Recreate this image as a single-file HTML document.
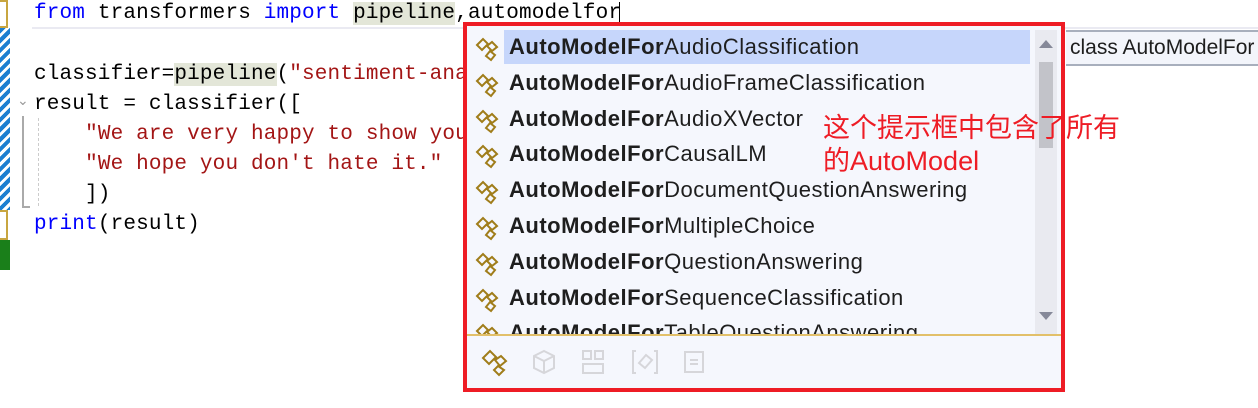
<!DOCTYPE html>
<html><head><meta charset="utf-8"><style>
body{margin:0;width:1258px;height:408px;background:#fff;position:relative;overflow:hidden;font-family:"Liberation Sans","Noto Sans CJK SC",sans-serif}
.code{position:absolute;left:34px;font-family:"Liberation Mono",monospace;font-size:21px;letter-spacing:0.16px;white-space:pre;color:#000;line-height:30px}
.k{color:#0000ff}.s{color:#a31515}.h{background:#e3e6d8}
.pop{position:absolute;left:463px;top:22px;width:594px;height:362px;border:4px solid #ee1c25;background:#f5f7fd}
.item{position:absolute;left:4px;height:34px;line-height:34px;font-size:22px;letter-spacing:0.5px;color:#1e1e1e;white-space:nowrap}
.item b{font-weight:bold}
.item svg{position:absolute;left:4px;top:6px}
.item span{position:absolute;left:38px}
</style></head><body>
<div style="position:absolute;left:0;top:0;width:6px;height:24px;border:2px solid #c8a640;border-left:none;background:#fff"></div>
<div style="position:absolute;left:0;top:28px;width:10px;height:182px;background:repeating-linear-gradient(135deg,#1c7fd1 0 4px,#fff 4px 7px)"></div>
<div style="position:absolute;left:0;top:210px;width:6px;height:26px;border:2px solid #c8a640;border-left:none"></div>
<div style="position:absolute;left:0;top:240px;width:10px;height:30px;background:#1a7f1a"></div>
<div style="position:absolute;left:32px;top:0;width:1226px;height:27px;border-bottom:2px solid #eaeaf2"></div>
<div style="position:absolute;left:22px;top:116px;width:2px;height:92px;background:#aaa"></div>
<div style="position:absolute;left:22px;top:206px;width:8px;height:2px;background:#aaa"></div>
<div style="position:absolute;left:38px;top:118px;width:0;height:88px;border-left:1px dashed #ccc"></div>
<div style="position:absolute;left:17px;top:92px;color:#999;font-size:14px">&#8964;</div>
<div class="code" style="top:-1px"><span class="k">from</span> transformers <span class="k">import</span> <span class="h">pipeline</span>,automodelfor</div>
<div style="position:absolute;left:619px;top:2px;width:1px;height:20px;background:#000"></div>
<div class="code" style="top:60px">classifier=<span class="h">pipeline</span>(<span class="s">"sentiment-ana</span></div>
<div class="code" style="top:90px">result = classifier([</div>
<div class="code" style="top:120px">    <span class="s">"We are very happy to show you</span></div>
<div class="code" style="top:150px">    <span class="s">"We hope you don't hate it."</span></div>
<div class="code" style="top:180px">    ])</div>
<div class="code" style="top:210px"><span class="k">print</span>(result)</div>
<div style="position:absolute;left:1066px;top:30px;width:200px;height:32px;background:#f3f5fb;border-top:2px solid #a8afbd;border-bottom:2px solid #a8afbd;font-size:21px;line-height:32px;padding-left:4px;color:#1e1e1e;white-space:nowrap">class AutoModelFor</div>
<div class="pop">
<div style="position:absolute;left:37px;top:4px;width:526px;height:34px;background:#c6d6fb"></div>
<div style="position:absolute;left:568px;top:4px;width:22px;height:306px;background:#e9eaf0"></div>
<div style="position:absolute;left:572px;top:36px;width:14px;height:86px;background:#c2c3c9"></div>
<div style="position:absolute;left:572px;top:14px;width:0;height:0;border-left:7px solid transparent;border-right:7px solid transparent;border-bottom:8px solid #868999"></div>
<div style="position:absolute;left:572px;top:286px;width:0;height:0;border-left:7px solid transparent;border-right:7px solid transparent;border-top:8px solid #868999"></div>
<div style="position:absolute;left:0;top:4px;width:566px;height:306px;overflow:hidden">
<div id="list"></div>
</div>
<div style="position:absolute;left:0;top:308px;width:594px;height:2px;background:#e2c06a"></div>
<svg style="position:absolute;left:14px;top:322px" width="34" height="30" viewBox="0 0 34 30" fill="none" stroke="#a07d1a" stroke-width="2"><path d="M2 10 L9 3 L15 9 L8 16Z M14 12 L20 8 L25 13 L19 18Z M17 18 L23 22 L18 27 L13 22Z"/></svg>
<svg style="position:absolute;left:64px;top:322px" width="26" height="28" viewBox="0 0 26 28" fill="none" stroke="#d6d6da" stroke-width="2"><path d="M13 3 L23 8 L23 20 L13 25 L3 20 L3 8Z M3 8 L13 13 L23 8 M13 13 L13 25"/></svg>
<svg style="position:absolute;left:114px;top:323px" width="24" height="26" viewBox="0 0 24 26" fill="none" stroke="#d6d6da" stroke-width="2"><rect x="2" y="2" width="8" height="8"/><rect x="14" y="2" width="8" height="8"/><rect x="2" y="15" width="20" height="9"/></svg>
<svg style="position:absolute;left:164px;top:323px" width="28" height="26" viewBox="0 0 28 26" fill="none" stroke="#d6d6da" stroke-width="2"><path d="M5 2 L2 2 L2 24 L5 24 M23 2 L26 2 L26 24 L23 24 M8 14 L15 6 L21 11 L14 19Z"/></svg>
<svg style="position:absolute;left:216px;top:324px" width="22" height="24" viewBox="0 0 22 24" fill="none" stroke="#d6d6da" stroke-width="2"><rect x="2" y="2" width="18" height="20"/><path d="M7 10 H15 M7 14 H15"/></svg>
</div>
<div style="position:absolute;left:823px;top:112px;color:#ee1c25;font-size:27px;line-height:33px;font-family:'Liberation Sans','Noto Sans CJK SC',sans-serif">这个提示框中包含了所有<br>的AutoModel</div>
<script>
var n=["AudioClassification","AudioFrameClassification","AudioXVector","CausalLM","DocumentQuestionAnswering","MultipleChoice","QuestionAnswering","SequenceClassification","TableQuestionAnswering"];
var h="";
n.forEach(function(s,i){h+='<div class="item" style="top:'+(i*35.8)+'px"><svg width="30" height="26" viewBox="0 0 30 26" fill="none" stroke="#a07d1a" stroke-width="2"><path d="M2 9 L8 3 L13 8 L7 14Z M12 10 L17 6 L22 11 L17 15Z M15 15 L20 19 L16 24 L11 20Z"/></svg><span><b>AutoModelFor</b>'+s+'</span></div>';});
document.getElementById("list").innerHTML=h;
</script>
</body></html>
